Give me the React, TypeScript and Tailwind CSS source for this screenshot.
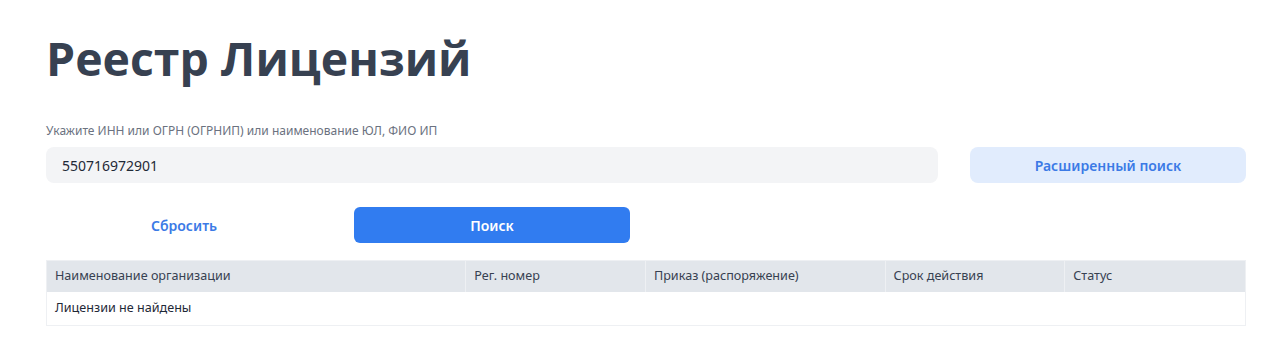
import React from "react";

export default function App() {
  const cols = [
    { t: "Наименование организации", w: "w-[420px]" },
    { t: "Рег. номер", w: "w-[180px]" },
    { t: "Приказ (распоряжение)", w: "w-[240px]" },
    { t: "Срок действия", w: "w-[180px]" },
    { t: "Статус", w: "w-[180px]" },
  ];
  return (
    <div className="bg-white w-[1284px] h-[343px] px-[46px] pt-[26px] text-[#1f2937]" style={{ fontFamily: '"Noto Sans", "Open Sans", sans-serif' }}>
      <h1 className="text-[46.4px] leading-[64px] font-bold text-[#374151]" style={{ fontFamily: '"Open Sans", sans-serif' }}>
        Реестр Лицензий
      </h1>
      <div className="mt-[33px] text-[12px] leading-[16px] text-[#6b7280]">
        Укажите ИНН или ОГРН (ОГРНИП) или наименование ЮЛ, ФИО ИП
      </div>
      <div className="mt-[8px] grid grid-cols-4 gap-x-8 gap-y-6 w-[1200px]">
        <div className="col-span-3 h-9 rounded-lg bg-[#f3f4f6] flex items-center px-4 text-[14px]">
          550716972901
        </div>
        <button className="h-9 rounded-lg bg-[#e1ecfd] text-[#3b7ae6] text-[14px] font-semibold">
          Расширенный поиск
        </button>
        <button className="h-9 text-[#3b7ae6] text-[14px] font-semibold">Сбросить</button>
        <button className="h-9 rounded-md bg-[#317cf0] text-white text-[14px] font-semibold">Поиск</button>
      </div>
      <div className="mt-[17px] w-[1200px] border border-[#eef0f3] text-[12.6px]">
        <div className="flex bg-[#e2e6eb] h-[31px]">
          {cols.map((c, i) => (
            <div
              key={c.t}
              className={`${c.w} flex items-center px-2 text-[#374151] ${i < cols.length - 1 ? "border-r border-[#eef0f3]" : ""}`}
            >
              {c.t}
            </div>
          ))}
        </div>
        <div className="h-[33px] flex items-center px-2 text-[#1f2937]">Лицензии не найдены</div>
      </div>
    </div>
  );
}
